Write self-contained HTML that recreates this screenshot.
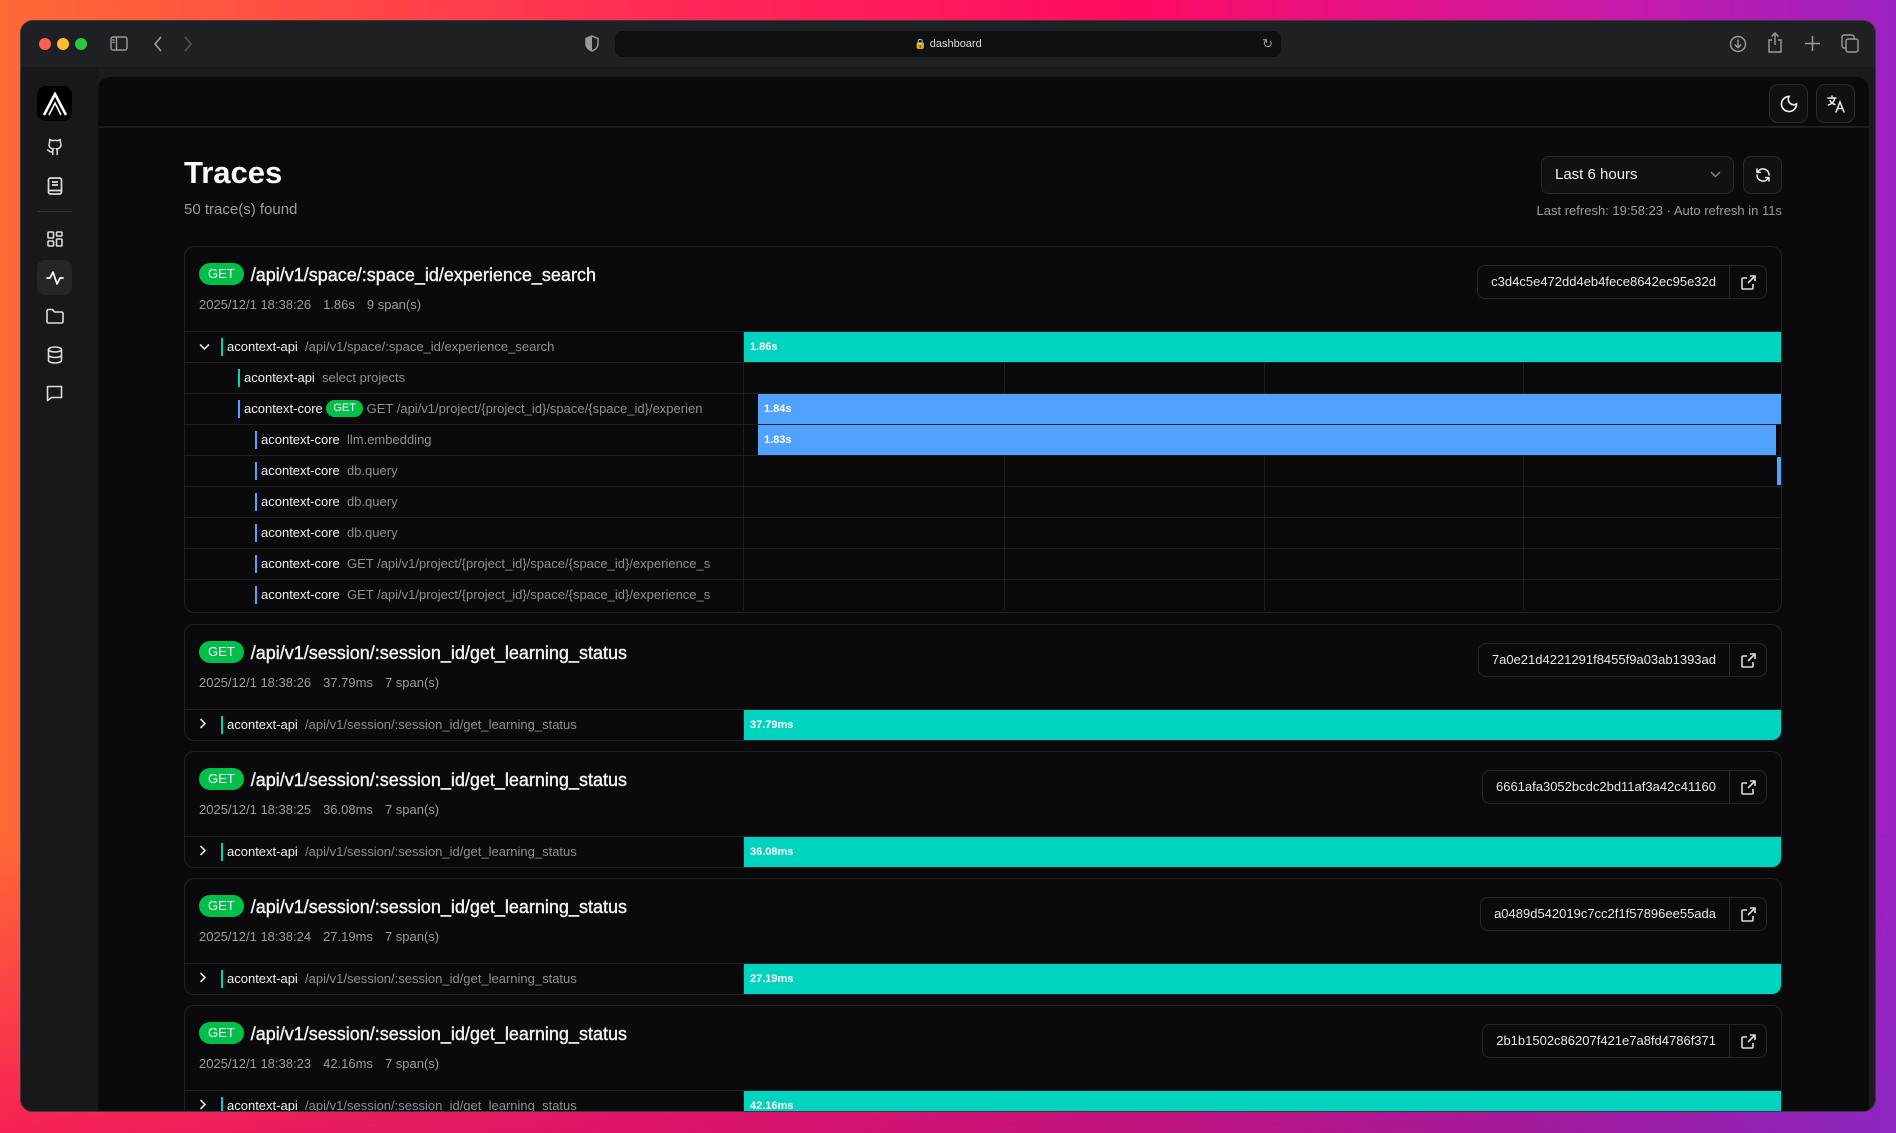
<!DOCTYPE html>
<html><head><meta charset="utf-8"><style>
*{box-sizing:border-box;margin:0;padding:0}
body{width:1896px;height:1133px;overflow:hidden;font-family:"Liberation Sans",sans-serif;position:relative;
background:linear-gradient(90deg,#ff6a35 0%,#ff2a55 35%,#ff0a62 60%,#c81aa8 85%,#9a22c2 100%);}
.bgb{position:absolute;left:0;right:0;bottom:0;height:300px;background:linear-gradient(90deg,#f5155a 0%,#d01070 40%,#9a1a9a 80%,#8a28c0 100%);opacity:.85;-webkit-mask:linear-gradient(180deg,transparent,#000);}
.win{position:absolute;left:20px;top:20px;width:1856px;height:1092px;border-radius:13px;background:#1b1b1e;overflow:hidden;border:1px solid #3a3a3e}
.tb{position:absolute;left:0;top:0;right:0;height:46px;background:#1f2023}
.dot{position:absolute;top:17px;width:12px;height:12px;border-radius:6px}
.addr{position:absolute;left:594px;top:10px;width:666px;height:26px;background:#0f1012;border-radius:7px;color:#ddd;font-size:11px;text-align:center;line-height:26px}
.side{position:absolute;left:0;top:46px;width:77px;bottom:0;background:#18181b}
.si{position:absolute;left:16px;width:35px;height:35px;display:flex;align-items:center;justify-content:center}
.main{position:absolute;left:77px;top:56px;width:1771px;height:1040px;background:#0a0a0c;border-radius:12px 12px 0 0;overflow:hidden}
.hdr{position:absolute;left:0;top:0;right:0;height:51px;border-bottom:2px solid #1d1d21}
.ib{position:absolute;top:7px;width:39px;height:39px;border:1px solid #2a2a2e;border-radius:9px;background:#101013;display:flex;align-items:center;justify-content:center}
.card{position:absolute;left:86px;width:1598px;border:1px solid #222226;border-radius:10px;overflow:hidden;background:#0a0a0c}
.badge{display:inline-block;background:#00c04b;color:#fff;border-radius:11px;font-size:13px;line-height:22px;height:22px;padding:0 9px;vertical-align:middle;font-weight:normal;-webkit-text-stroke:0}
.ct{position:absolute;left:14px;top:18px;font-size:18px;color:#f2f2f2;white-space:nowrap;-webkit-text-stroke:0.4px #f2f2f2}
.ct .badge{margin-right:7px;position:relative;top:-2px}
.meta{position:absolute;left:14px;font-size:13px;color:#9a9aa0;word-spacing:0}
.meta span{margin-right:12px}
.tid{position:absolute;right:14px;height:34px;border:1px solid #26262a;border-radius:8px;display:flex;font-size:13px;color:#e8e8e8}
.tid .t{padding:0 13px;line-height:32px;border-right:1px solid #26262a}
.tid .l{width:36px;display:flex;align-items:center;justify-content:center}
.row{position:absolute;left:0;width:1598px;height:31px;border-top:1px solid #1e1e22}
.lab{position:absolute;left:0;top:0;width:559px;height:100%;border-right:1px solid #1e1e22;white-space:nowrap;overflow:hidden;font-size:13px;line-height:30px;color:#f0f0f0}
.lab .m{position:absolute;top:6px;width:2px;height:18px}
.lab .n{position:absolute;top:0}
.lab .g{color:#8e8e94}
.chev{position:absolute;left:14px;top:0;color:#ddd;font-size:13px}
.bars{position:absolute;left:559px;top:0;right:0;height:100%}
.gl{position:absolute;top:0;bottom:0;width:1px;background:#1e1e22}
.bar{position:absolute;top:0;bottom:0;font-size:11px;font-weight:bold;color:#fff;line-height:30px;padding-left:6px}
.teal{background:#00d4bf}.blue{background:#50a2fd}
</style></head><body>
<div class="bgb"></div>
<div class="win">
 <div class="tb">
  <div class="dot" style="left:18px;background:#fe5f57"></div>
  <div class="dot" style="left:36px;background:#febc2e"></div>
  <div class="dot" style="left:54px;background:#28c840"></div>
  <svg style="position:absolute;left:89px;top:15px" width="18" height="15" viewBox="0 0 18 15" fill="none" stroke="#9a9aa0" stroke-width="1.4"><rect x="1" y="1" width="16" height="13" rx="2"/><path d="M6.5 1v13M2.5 4h2M2.5 6.5h2"/></svg>
  <svg style="position:absolute;left:132px;top:15px" width="10" height="16" viewBox="0 0 10 16" fill="none" stroke="#a0a0a6" stroke-width="1.6"><path d="M8 1L2 8l6 7"/></svg>
  <svg style="position:absolute;left:162px;top:15px" width="10" height="16" viewBox="0 0 10 16" fill="none" stroke="#55555a" stroke-width="1.6"><path d="M2 1l6 7-6 7"/></svg>
  <svg style="position:absolute;left:564px;top:14px" width="14" height="17" viewBox="0 0 14 17"><path d="M7 1L1 3.5v5c0 4 3 6.5 6 7.5 3-1 6-3.5 6-7.5v-5z" fill="none" stroke="#999" stroke-width="1.5"/><path d="M7 1L1 3.5v5c0 4 3 6.5 6 7.5z" fill="#999"/></svg>
  <div class="addr"><span style="font-size:10px">🔒</span> dashboard<span style="position:absolute;right:8px;color:#999;font-size:13px">↻</span></div>
  <svg style="position:absolute;left:1708px;top:14px" width="18" height="18" viewBox="0 0 18 18" fill="none" stroke="#9a9aa0" stroke-width="1.4"><circle cx="9" cy="9" r="7.5"/><path d="M9 4.5v8M5.8 9.5L9 12.7l3.2-3.2"/></svg>
  <svg style="position:absolute;left:1746px;top:11px" width="16" height="21" viewBox="0 0 16 21" fill="none" stroke="#9a9aa0" stroke-width="1.4"><path d="M5 8H2v12h12V8h-3M8 13V1M4.5 4.5L8 1l3.5 3.5"/></svg>
  <svg style="position:absolute;left:1784px;top:15px" width="15" height="15" viewBox="0 0 15 15" stroke="#9a9aa0" stroke-width="1.5"><path d="M7.5 0v15M0 7.5h15"/></svg>
  <svg style="position:absolute;left:1820px;top:13px" width="18" height="19" viewBox="0 0 18 19" fill="none" stroke="#9a9aa0" stroke-width="1.4"><rect x="5" y="5" width="12" height="13" rx="2"/><path d="M13 5V3a2 2 0 0 0-2-2H3a2 2 0 0 0-2 2v9a2 2 0 0 0 2 2h2"/></svg>
 </div>
 <div class="side">
  <div style="position:absolute;left:16px;top:19px;width:35px;height:35px;background:#000;border-radius:9px;display:flex;align-items:center;justify-content:center">
   <svg width="26" height="24" viewBox="0 0 26 24" fill="none" stroke="#fff" stroke-width="2.6"><path d="M2 23L13 2l11 21"/><path d="M7 23L13 11l6 12" stroke-width="1.6"/></svg>
  </div>
  <div class="si" style="top:62px"><svg width="18" height="18" viewBox="0 0 24 24" fill="none" stroke="#ddd" stroke-width="2" stroke-linecap="round"><path d="M15 22v-4a4.8 4.8 0 0 0-1-3.5c3 0 6-2 6-5.5.08-1.25-.27-2.48-1-3.5.28-1.15.28-2.350 0-3.5 0 0-1 0-3 1.5-2.64-.5-5.36-.5-8 0C6 2 5 2 5 2c-.3 1.15-.3 2.35 0 3.5A5.4 5.4 0 0 0 4 9c0 3.5 3 5.5 6 5.5-.39.49-.68 1.05-.85 1.65S8.93 17.38 9 18v4M9 18c-4.51 2-5-2-7-2"/></svg></div>
  <div class="si" style="top:101px"><svg width="16" height="18" viewBox="0 0 16 18" fill="none" stroke="#ddd" stroke-width="1.7"><rect x="1.5" y="1" width="13" height="16" rx="2"/><path d="M1.5 13.5h13M5 5h6M5 8h6"/></svg></div>
  <div style="position:absolute;left:16px;top:144px;width:35px;height:1px;background:#333"></div>
  <div class="si" style="top:154px"><svg width="16" height="16" viewBox="0 0 16 16" fill="none" stroke="#ddd" stroke-width="1.6"><rect x="1" y="1" width="5.5" height="6" rx="1"/><rect x="9.5" y="1" width="5.5" height="4" rx="1"/><rect x="1" y="10" width="5.5" height="5" rx="1"/><rect x="9.5" y="8" width="5.5" height="7" rx="1"/></svg></div>
  <div class="si" style="top:193px;background:#26262a;border-radius:8px"><svg width="18" height="16" viewBox="0 0 18 16" fill="none" stroke="#fff" stroke-width="1.7" stroke-linecap="round" stroke-linejoin="round"><path d="M1 8h3l3-6 4 12 3-6h3"/></svg></div>
  <div class="si" style="top:231px"><svg width="18" height="16" viewBox="0 0 18 16" fill="none" stroke="#ddd" stroke-width="1.6" stroke-linejoin="round"><path d="M1 3a1.5 1.5 0 0 1 1.5-1.5h4l2 2.5h7A1.5 1.5 0 0 1 17 5.5v8a1.5 1.5 0 0 1-1.5 1.5h-13A1.5 1.5 0 0 1 1 13.5z"/></svg></div>
  <div class="si" style="top:270px"><svg width="16" height="18" viewBox="0 0 16 18" fill="none" stroke="#ddd" stroke-width="1.6"><ellipse cx="8" cy="3.5" rx="6.5" ry="2.5"/><path d="M1.5 3.5v11c0 1.4 2.9 2.5 6.5 2.5s6.5-1.1 6.5-2.5v-11M1.5 9c0 1.4 2.9 2.5 6.5 2.5s6.5-1.1 6.5-2.5"/></svg></div>
  <div class="si" style="top:309px"><svg width="17" height="17" viewBox="0 0 17 17" fill="none" stroke="#ddd" stroke-width="1.6" stroke-linejoin="round"><path d="M1.5 1.5h14v11h-10l-4 3z"/></svg></div>
 </div>
 <div class="main">
  <div class="hdr">
   <div class="ib" style="left:1671px"><svg width="18" height="18" viewBox="0 0 18 18" fill="none" stroke="#eee" stroke-width="1.7"><path d="M9 1.5a7.5 7.5 0 1 0 7.5 7.5A5.5 5.5 0 0 1 9 1.5z"/></svg></div>
   <div class="ib" style="left:1718px"><svg width="18" height="18" viewBox="0 0 18 18" fill="none" stroke="#eee" stroke-width="1.5" stroke-linecap="round"><path d="M1 3h8M5 1v2M7.5 3c0 3-2.5 6-6 7M3 5.5c1 2 3 3.5 5 4M9 17l4-10 4 10M10.5 13.5h5"/></svg></div>
  </div>
  <div style="position:absolute;left:86px;top:78px;font-size:31px;font-weight:bold;color:#fafafa">Traces</div>
  <div style="position:absolute;left:86px;top:124px;font-size:15px;color:#9a9aa0">50 trace(s) found</div>
  <div style="position:absolute;left:1443px;top:79px;width:193px;height:38px;border:1px solid #2a2a2e;border-radius:8px;background:#111114;color:#eee;font-size:15px;line-height:36px;padding-left:13px">Last 6 hours<svg style="position:absolute;right:12px;top:14px" width="11" height="7" viewBox="0 0 11 7" fill="none" stroke="#888" stroke-width="1.4"><path d="M1 1l4.5 4.5L10 1"/></svg></div>
  <div style="position:absolute;left:1645px;top:79px;width:39px;height:38px;border:1px solid #2a2a2e;border-radius:8px;background:#111114;display:flex;align-items:center;justify-content:center"><svg width="16" height="16" viewBox="0 0 24 24" fill="none" stroke="#eee" stroke-width="2.2" stroke-linecap="round" stroke-linejoin="round"><path d="M21 12a9 9 0 0 0-15.5-6.3L3 8M3 3v5h5M3 12a9 9 0 0 0 15.5 6.3L21 16M21 21v-5h-5"/></svg></div>
  <div style="position:absolute;right:87px;top:126px;font-size:13px;color:#9a9aa0">Last refresh: 19:58:23 · Auto refresh in 11s</div>

  <div class="card" style="top:169px;height:367px">
   <div class="ct"><span class="badge">GET</span>/api/v1/space/:space_id/experience_search</div>
   <div class="meta" style="top:50px"><span>2025/12/1 18:38:26</span><span>1.86s</span><span>9 span(s)</span></div>
   <div class="tid" style="top:18px"><div class="t">c3d4c5e472dd4eb4fece8642ec95e32d</div><div class="l"><svg width="15" height="15" viewBox="0 0 15 15" fill="none" stroke="#ddd" stroke-width="1.6"><path d="M9 1h5v5M14 1L7 8M12 9v4a1 1 0 0 1-1 1H2a1 1 0 0 1-1-1V4a1 1 0 0 1 1-1h4"/></svg></div></div>
   <div class="row" style="top:84px"><div class="lab"><span class="chev"><svg width="11" height="8" viewBox="0 0 11 8" fill="none" stroke="#ddd" stroke-width="1.6"><path d="M1 1.5l4.5 4.5L10 1.5"/></svg></span><span class="m teal" style="left:36px"></span><span class="n" style="left:42px">acontext-api <span class="g">&nbsp;/api/v1/space/:space_id/experience_search</span></span></div><div class="bars"><div class="bar teal" style="left:0;right:0">1.86s</div></div></div>
   <div class="row" style="top:115px"><div class="lab"><span class="m teal" style="left:53px"></span><span class="n" style="left:59px">acontext-api <span class="g">&nbsp;select projects</span></span></div><div class="bars"><div class="gl" style="left:260px"></div><div class="gl" style="left:520px"></div><div class="gl" style="left:779px"></div></div></div>
   <div class="row" style="top:146px"><div class="lab"><span class="m blue" style="left:53px"></span><span class="n" style="left:59px">acontext-core <span class="badge" style="font-size:11px;height:17px;line-height:17px;padding:0 7px;position:relative;top:-1px">GET</span> <span class="g">GET /api/v1/project/{project_id}/space/{space_id}/experien</span></span></div><div class="bars"><div class="bar blue" style="left:14px;right:0">1.84s</div></div></div>
   <div class="row" style="top:177px"><div class="lab"><span class="m blue" style="left:70px"></span><span class="n" style="left:76px">acontext-core <span class="g">&nbsp;llm.embedding</span></span></div><div class="bars"><div class="bar blue" style="left:14px;right:7px">1.83s</div></div></div>
   <div class="row" style="top:208px"><div class="lab"><span class="m blue" style="left:70px"></span><span class="n" style="left:76px">acontext-core <span class="g">&nbsp;db.query</span></span></div><div class="bars"><div class="gl" style="left:260px"></div><div class="gl" style="left:520px"></div><div class="gl" style="left:779px"></div><div class="bar blue" style="right:2px;width:4px;top:1px;bottom:1px;padding:0"></div></div></div>
   <div class="row" style="top:239px"><div class="lab"><span class="m blue" style="left:70px"></span><span class="n" style="left:76px">acontext-core <span class="g">&nbsp;db.query</span></span></div><div class="bars"><div class="gl" style="left:260px"></div><div class="gl" style="left:520px"></div><div class="gl" style="left:779px"></div><div class="bar blue" style="right:1px;width:1px;padding:0"></div></div></div>
   <div class="row" style="top:270px"><div class="lab"><span class="m blue" style="left:70px"></span><span class="n" style="left:76px">acontext-core <span class="g">&nbsp;db.query</span></span></div><div class="bars"><div class="gl" style="left:260px"></div><div class="gl" style="left:520px"></div><div class="gl" style="left:779px"></div><div class="bar blue" style="right:0;width:1px;padding:0"></div></div></div>
   <div class="row" style="top:301px"><div class="lab"><span class="m blue" style="left:70px"></span><span class="n" style="left:76px">acontext-core <span class="g">&nbsp;GET /api/v1/project/{project_id}/space/{space_id}/experience_s</span></span></div><div class="bars"><div class="gl" style="left:260px"></div><div class="gl" style="left:520px"></div><div class="gl" style="left:779px"></div></div></div>
   <div class="row" style="top:332px"><div class="lab"><span class="m blue" style="left:70px"></span><span class="n" style="left:76px">acontext-core <span class="g">&nbsp;GET /api/v1/project/{project_id}/space/{space_id}/experience_s</span></span></div><div class="bars"><div class="gl" style="left:260px"></div><div class="gl" style="left:520px"></div><div class="gl" style="left:779px"></div></div></div>
  </div>

  <div class="card" style="top:547px;height:117px">
   <div class="ct"><span class="badge">GET</span>/api/v1/session/:session_id/get_learning_status</div>
   <div class="meta" style="top:50px"><span>2025/12/1 18:38:26</span><span>37.79ms</span><span>7 span(s)</span></div>
   <div class="tid" style="top:18px"><div class="t">7a0e21d4221291f8455f9a03ab1393ad</div><div class="l"><svg width="15" height="15" viewBox="0 0 15 15" fill="none" stroke="#ddd" stroke-width="1.6"><path d="M9 1h5v5M14 1L7 8M12 9v4a1 1 0 0 1-1 1H2a1 1 0 0 1-1-1V4a1 1 0 0 1 1-1h4"/></svg></div></div>
   <div class="row" style="top:84px"><div class="lab"><span class="chev"><svg width="8" height="11" viewBox="0 0 8 11" fill="none" stroke="#ddd" stroke-width="1.6"><path d="M1.5 1l4.5 4.5L1.5 10"/></svg></span><span class="m teal" style="left:36px"></span><span class="n" style="left:42px">acontext-api <span class="g">&nbsp;/api/v1/session/:session_id/get_learning_status</span></span></div><div class="bars"><div class="bar teal" style="left:0;right:0">37.79ms</div></div></div>
  </div>
  <div class="card" style="top:674px;height:117px">
   <div class="ct"><span class="badge">GET</span>/api/v1/session/:session_id/get_learning_status</div>
   <div class="meta" style="top:50px"><span>2025/12/1 18:38:25</span><span>36.08ms</span><span>7 span(s)</span></div>
   <div class="tid" style="top:18px"><div class="t">6661afa3052bcdc2bd11af3a42c41160</div><div class="l"><svg width="15" height="15" viewBox="0 0 15 15" fill="none" stroke="#ddd" stroke-width="1.6"><path d="M9 1h5v5M14 1L7 8M12 9v4a1 1 0 0 1-1 1H2a1 1 0 0 1-1-1V4a1 1 0 0 1 1-1h4"/></svg></div></div>
   <div class="row" style="top:84px"><div class="lab"><span class="chev"><svg width="8" height="11" viewBox="0 0 8 11" fill="none" stroke="#ddd" stroke-width="1.6"><path d="M1.5 1l4.5 4.5L1.5 10"/></svg></span><span class="m teal" style="left:36px"></span><span class="n" style="left:42px">acontext-api <span class="g">&nbsp;/api/v1/session/:session_id/get_learning_status</span></span></div><div class="bars"><div class="bar teal" style="left:0;right:0">36.08ms</div></div></div>
  </div>
  <div class="card" style="top:801px;height:117px">
   <div class="ct"><span class="badge">GET</span>/api/v1/session/:session_id/get_learning_status</div>
   <div class="meta" style="top:50px"><span>2025/12/1 18:38:24</span><span>27.19ms</span><span>7 span(s)</span></div>
   <div class="tid" style="top:18px"><div class="t">a0489d542019c7cc2f1f57896ee55ada</div><div class="l"><svg width="15" height="15" viewBox="0 0 15 15" fill="none" stroke="#ddd" stroke-width="1.6"><path d="M9 1h5v5M14 1L7 8M12 9v4a1 1 0 0 1-1 1H2a1 1 0 0 1-1-1V4a1 1 0 0 1 1-1h4"/></svg></div></div>
   <div class="row" style="top:84px"><div class="lab"><span class="chev"><svg width="8" height="11" viewBox="0 0 8 11" fill="none" stroke="#ddd" stroke-width="1.6"><path d="M1.5 1l4.5 4.5L1.5 10"/></svg></span><span class="m teal" style="left:36px"></span><span class="n" style="left:42px">acontext-api <span class="g">&nbsp;/api/v1/session/:session_id/get_learning_status</span></span></div><div class="bars"><div class="bar teal" style="left:0;right:0">27.19ms</div></div></div>
  </div>
  <div class="card" style="top:928px;height:117px">
   <div class="ct"><span class="badge">GET</span>/api/v1/session/:session_id/get_learning_status</div>
   <div class="meta" style="top:50px"><span>2025/12/1 18:38:23</span><span>42.16ms</span><span>7 span(s)</span></div>
   <div class="tid" style="top:18px"><div class="t">2b1b1502c86207f421e7a8fd4786f371</div><div class="l"><svg width="15" height="15" viewBox="0 0 15 15" fill="none" stroke="#ddd" stroke-width="1.6"><path d="M9 1h5v5M14 1L7 8M12 9v4a1 1 0 0 1-1 1H2a1 1 0 0 1-1-1V4a1 1 0 0 1 1-1h4"/></svg></div></div>
   <div class="row" style="top:84px"><div class="lab"><span class="chev"><svg width="8" height="11" viewBox="0 0 8 11" fill="none" stroke="#ddd" stroke-width="1.6"><path d="M1.5 1l4.5 4.5L1.5 10"/></svg></span><span class="m teal" style="left:36px"></span><span class="n" style="left:42px">acontext-api <span class="g">&nbsp;/api/v1/session/:session_id/get_learning_status</span></span></div><div class="bars"><div class="bar teal" style="left:0;right:0">42.16ms</div></div></div>
  </div>
 </div>
</div>
</body></html>
